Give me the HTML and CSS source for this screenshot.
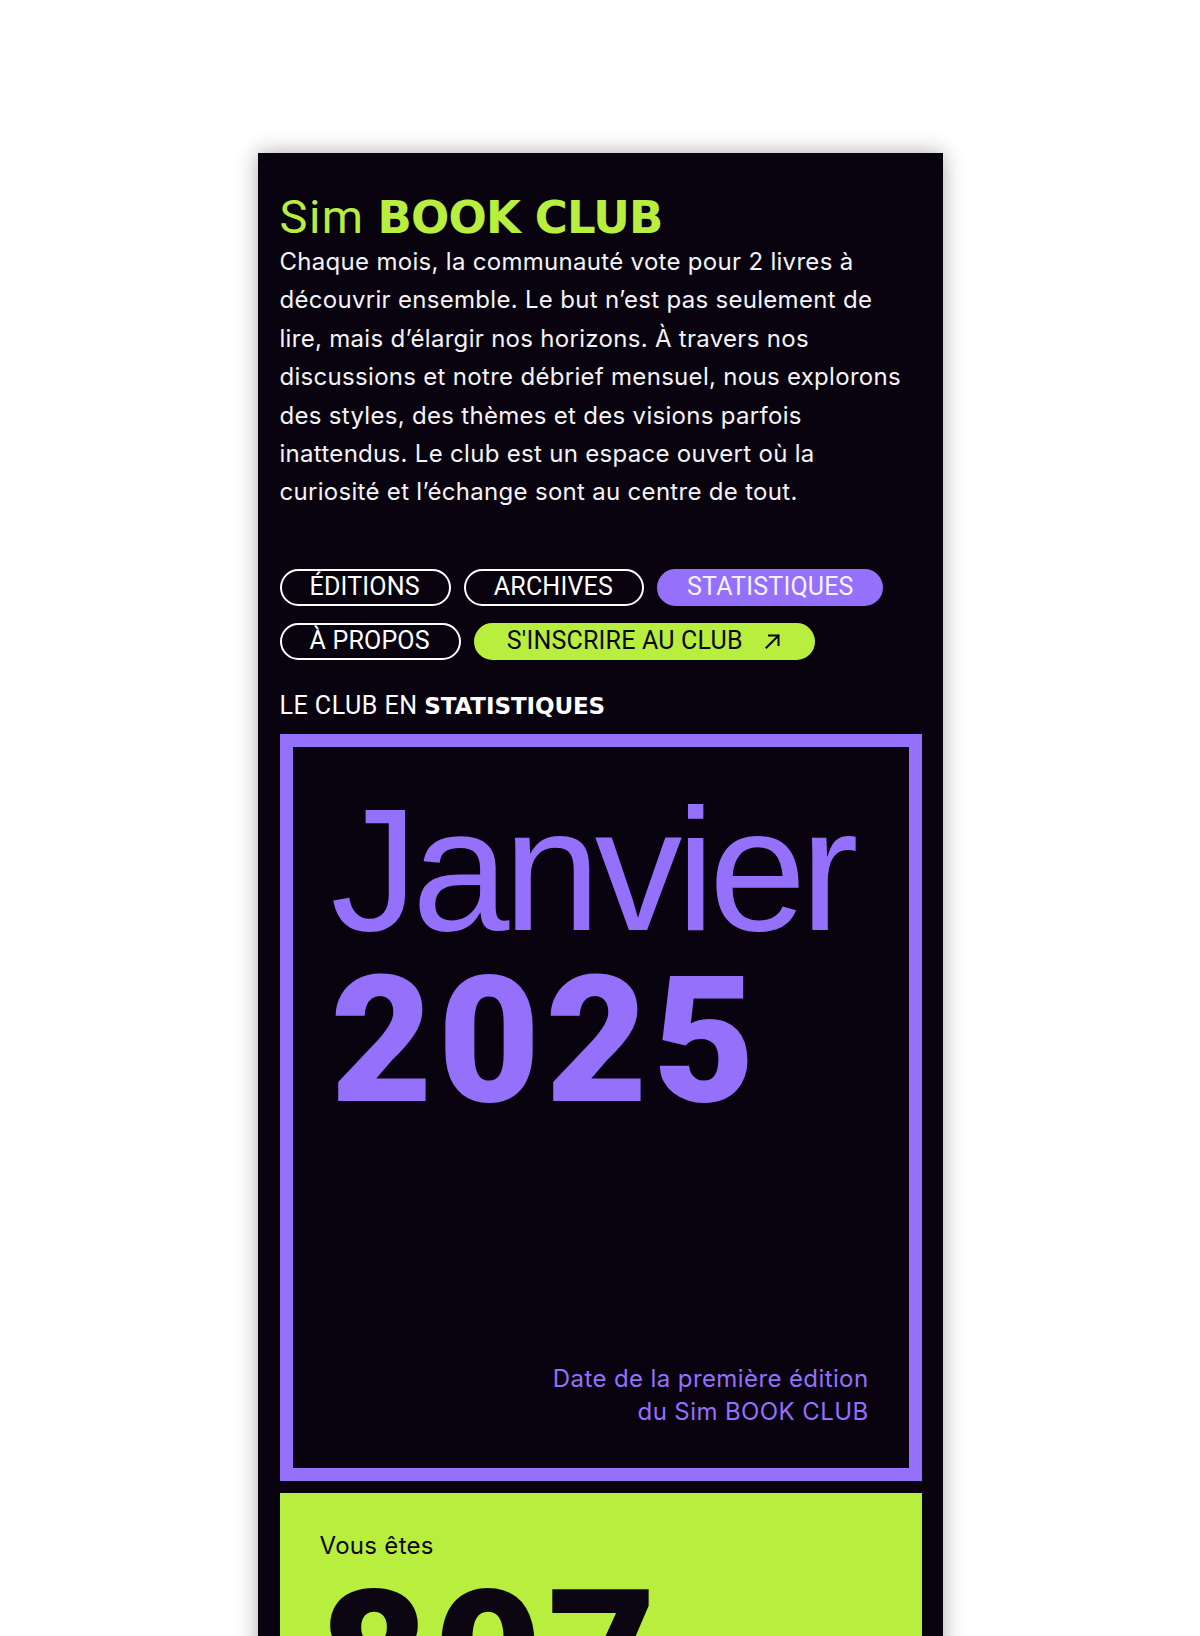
FILE: index.html
```html
<!DOCTYPE html>
<html lang="fr">
<head>
<meta charset="utf-8">
<title>Sim BOOK CLUB — Statistiques</title>
<link rel="stylesheet" href="styles.css">
</head>
<body>
<main class="card">
  <header class="intro">
    <h1 class="title"><span class="title-light">Sim</span> <span class="title-bold">BOOK CLUB</span></h1>
    <p class="lead">Chaque mois, la communauté vote pour 2 livres à<br>découvrir ensemble. Le but n’est pas seulement de<br>lire, mais d’élargir nos horizons. À travers nos<br>discussions et notre débrief mensuel, nous explorons<br>des styles, des thèmes et des visions parfois<br>inattendus. Le club est un espace ouvert où la<br>curiosité et l’échange sont au centre de tout.</p>
  </header>

  <nav class="nav">
    <a class="pill pill-outline" href="#">ÉDITIONS</a>
    <a class="pill pill-outline" href="#">ARCHIVES</a>
    <a class="pill pill-active" href="#">STATISTIQUES</a>
    <a class="pill pill-outline" href="#">À PROPOS</a>
    <a class="pill pill-cta" href="#">S'INSCRIRE AU CLUB
      <svg class="arrow" viewBox="0 0 20 20" width="20" height="20" aria-hidden="true"><path d="M3.5 16.5 L15.5 4.5 M6 4.5 H15.5 V14" fill="none" stroke="currentColor" stroke-width="2" stroke-linecap="square"/></svg>
    </a>
  </nav>

  <h2 class="section-label">LE CLUB EN <strong>STATISTIQUES</strong></h2>

  <section class="stat-frame">
    <div class="stat-main">
      <div class="month">Janvier</div>
      <div class="year">2025</div>
    </div>
    <p class="stat-caption">Date de la première édition<br>du Sim BOOK CLUB</p>
  </section>

  <section class="stat-green">
    <p class="green-label">Vous êtes</p>
    <div class="green-number">807</div>
  </section>
</main>
</body>
</html>
```

FILE: styles.css
```css
html, body {
  margin: 0;
  padding: 0;
  background: #ffffff;
}

body {
  font-family: "Inter", "Roboto", sans-serif;
}

.card {
  width: 685px;
  box-sizing: border-box;
  margin: 153px auto 0;
  padding: 38px 21px 60px 22px;
  background: #08030f;
  box-shadow: 0 0 20px rgba(0, 0, 0, 0.34);
}

.title {
  margin: 0;
  font-size: 46px;
  line-height: 50px;
  font-weight: 400;
  color: #b8ef3e;
  white-space: nowrap;
}

.title-light {
  font-family: "Roboto", sans-serif;
  font-size: 47px;
  letter-spacing: 1.5px;
}

.title-bold {
  font-family: "DejaVu Sans", sans-serif;
  font-weight: 700;
  font-size: 45px;
  letter-spacing: -0.8px;
}

.lead {
  margin: 0;
  font-family: "Inter", sans-serif;
  font-size: 24px;
  line-height: 38.4px;
  color: #f4f3f6;
  letter-spacing: 0.3px;
  white-space: nowrap;
}

.nav {
  display: flex;
  flex-wrap: wrap;
  gap: 17px 13px;
  margin-top: 57px;
}

.pill {
  display: inline-flex;
  align-items: center;
  gap: 20px;
  height: 37px;
  box-sizing: border-box;
  padding: 0 29px 0 28px;
  border: 2px solid #ffffff;
  border-radius: 19px;
  font-family: "Roboto", sans-serif;
  font-size: 25px;
  line-height: 32px;
  letter-spacing: 0.2px;
  text-decoration: none;
  color: #ffffff;
  white-space: nowrap;
}

.pill-outline {
  background: transparent;
}

.pill-active {
  background: #9470fb;
  border-color: #9470fb;
  color: #f6f2ff;
  padding: 0 27px 0 28px;
}

.pill-cta {
  background: #b8ef3e;
  border-color: #b8ef3e;
  color: #0b0612;
  padding: 0 30px 0 31px;
}

.arrow {
  display: block;
}

.section-label {
  margin: 31px 0 0;
  font-family: "Roboto", sans-serif;
  font-size: 25px;
  line-height: 30px;
  font-weight: 400;
  letter-spacing: 0.5px;
  color: #ffffff;
}

.section-label strong {
  font-family: "DejaVu Sans", sans-serif;
  font-size: 23px;
  font-weight: 700;
  letter-spacing: -0.1px;
}

.stat-frame {
  margin-top: 13px;
  height: 747px;
  box-sizing: border-box;
  border: 13px solid #9470fb;
  padding: 35px 40px 40px 38px;
  display: flex;
  flex-direction: column;
  justify-content: space-between;
  color: #9470fb;
}

.month {
  font-family: "Liberation Sans", "Roboto", sans-serif;
  font-size: 175px;
  line-height: 176px;
  letter-spacing: -6px;
  font-weight: 400;
}

.year {
  font-family: "Roboto", sans-serif;
  font-size: 176px;
  line-height: 166px;
  font-weight: 900;
  letter-spacing: 5.5px;
}

.stat-caption {
  margin: 0;
  text-align: right;
  font-family: "Inter", sans-serif;
  font-size: 24px;
  line-height: 33px;
  letter-spacing: 0.4px;
  color: #9470fb;
}

.stat-green {
  margin-top: 12px;
  background: #b8ef3e;
  padding: 36px 40px 40px;
  color: #0b0612;
}

.green-label {
  margin: 0;
  font-family: "Inter", sans-serif;
  font-size: 24px;
  line-height: 33.6px;
  letter-spacing: 0.3px;
}

.green-number {
  margin-top: 12px;
  font-family: "Roboto", sans-serif;
  font-size: 188px;
  line-height: 170px;
  font-weight: 900;
  letter-spacing: 5px;
}
```
